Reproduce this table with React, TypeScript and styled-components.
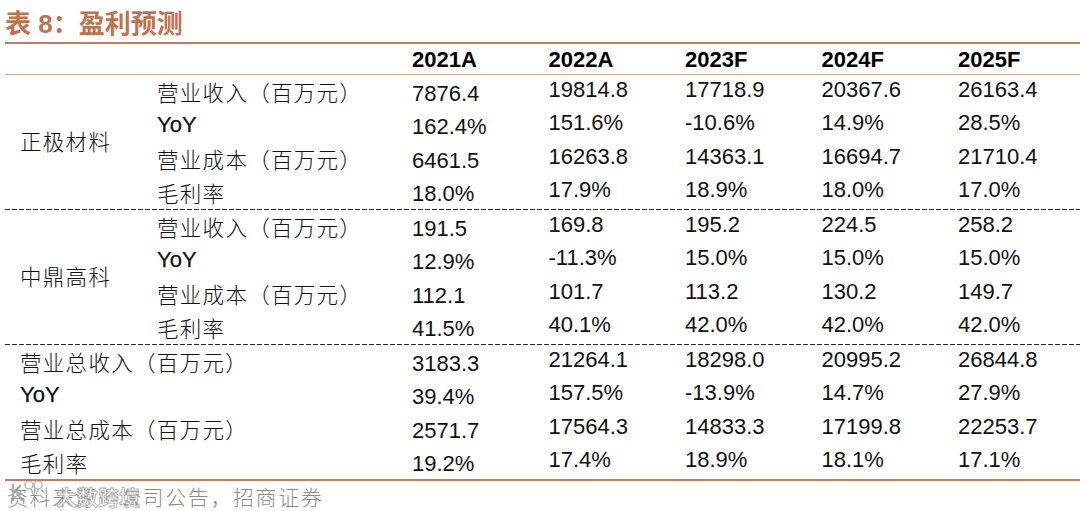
import React, { FC } from 'react';
import styled, { createGlobalStyle } from 'styled-components';

const GlobalStyle = createGlobalStyle`
  html, body {
    margin: 0;
    padding: 0;
    background: #ffffff;
  }
  body {
    font-family: "Liberation Sans", "Noto Sans CJK SC", sans-serif;
    color: #111;
  }
`;

const GRID = '152px 255px repeat(4, 136.5px) 1fr';

type Row = { label: string; values: string[] };
type Group = { name?: string; rows: Row[] };

const years = ['2021A', '2022A', '2023F', '2024F', '2025F'];

const groups: Group[] = [
  {
    name: '正极材料',
    rows: [
      { label: '营业收入（百万元）', values: ['7876.4', '19814.8', '17718.9', '20367.6', '26163.4'] },
      { label: 'YoY', values: ['162.4%', '151.6%', '-10.6%', '14.9%', '28.5%'] },
      { label: '营业成本（百万元）', values: ['6461.5', '16263.8', '14363.1', '16694.7', '21710.4'] },
      { label: '毛利率', values: ['18.0%', '17.9%', '18.9%', '18.0%', '17.0%'] },
    ],
  },
  {
    name: '中鼎高科',
    rows: [
      { label: '营业收入（百万元）', values: ['191.5', '169.8', '195.2', '224.5', '258.2'] },
      { label: 'YoY', values: ['12.9%', '-11.3%', '15.0%', '15.0%', '15.0%'] },
      { label: '营业成本（百万元）', values: ['112.1', '101.7', '113.2', '130.2', '149.7'] },
      { label: '毛利率', values: ['41.5%', '40.1%', '42.0%', '42.0%', '42.0%'] },
    ],
  },
  {
    rows: [
      { label: '营业总收入（百万元）', values: ['3183.3', '21264.1', '18298.0', '20995.2', '26844.8'] },
      { label: 'YoY', values: ['39.4%', '157.5%', '-13.9%', '14.7%', '27.9%'] },
      { label: '营业总成本（百万元）', values: ['2571.7', '17564.3', '14833.3', '17199.8', '22253.7'] },
      { label: '毛利率', values: ['19.2%', '17.4%', '18.9%', '18.1%', '17.1%'] },
    ],
  },
];

const Page = styled.div`
  position: relative;
  width: 1080px;
  height: 511px;
  overflow: hidden;
  padding-left: 5px;
  box-sizing: border-box;
`;

const Title = styled.div`
  height: 42px;
  display: flex;
  align-items: center;
  font-size: 26px;
  font-weight: 700;
  color: #c0714f;
  white-space: pre;
`;

const Table = styled.div`
  width: 1075px;
  border-top: 2px solid #c47b61;
  border-bottom: 2px solid #c47b61;
`;

const HeaderRow = styled.div`
  display: grid;
  grid-template-columns: ${GRID};
  height: 30px;
  border-bottom: 1px solid #d8a491;
  align-items: center;
`;

const HeadCell = styled.div`
  font-size: 22px;
  font-weight: 700;
  color: #000;
  padding-top: 2px;
`;

const Section = styled.div`
  display: grid;
  grid-template-columns: ${GRID};
  grid-auto-rows: 33.5px;
  align-items: center;
`;

const DashLine = styled.div`
  height: 1px;
  background-image: repeating-linear-gradient(to right, #2a2a2a 0 5px, transparent 5px 7px);
`;

const GroupName = styled.div`
  grid-column: 1;
  grid-row: 1 / span 4;
  padding-left: 15px;
  font-size: 21.5px;
  letter-spacing: 1.3px;
  font-family: "Noto Sans CJK SC", sans-serif;
  font-weight: 300;
  align-self: center;
  padding-bottom: 4px;
`;

const RowLabel = styled.div<{ $wide?: boolean; $latin?: boolean }>`
  grid-column: ${(p) => (p.$wide ? '1 / span 2' : '2')};
  padding-left: ${(p) => (p.$wide ? '15px' : '0')};
  font-size: ${(p) => (p.$latin ? '22px' : '21.5px')};
  letter-spacing: ${(p) => (p.$latin ? '0' : '1.3px')};
  font-family: ${(p) =>
    p.$latin ? '"Liberation Sans", sans-serif' : '"Noto Sans CJK SC", sans-serif'};
  font-weight: ${(p) => (p.$latin ? 400 : 300)};
  -webkit-text-stroke: ${(p) => (p.$latin ? '0.25px #111' : '0')};
  white-space: nowrap;
`;

const Value = styled.div<{ $first?: boolean }>`
  font-size: 22px;
  white-space: nowrap;
  transform: translateY(${(p) => (p.$first ? '2px' : '-2px')});
`;

const Source = styled.div`
  height: 30px;
  display: flex;
  align-items: center;
  padding-left: 2px;
  font-family: "Noto Sans CJK SC", sans-serif;
  font-weight: 300;
  font-size: 21px;
  letter-spacing: 1.6px;
  color: #8c8c8c;
`;

/* semi-transparent site watermark lying over the source note */
const Watermark = styled.div`
  position: absolute;
  left: 10px;
  top: 479px;
  display: flex;
  align-items: flex-start;
  gap: 10px;
  font-family: "Noto Sans CJK SC", sans-serif;
  font-weight: 700;
  font-size: 21px;
  line-height: 1;
  color: rgba(248, 248, 248, 0.9);
  -webkit-text-stroke: 0.8px rgba(140, 140, 140, 0.75);

  span {
    margin-top: 7px;
  }
`;

const isLatin = (s: string) => /^[A-Za-z]+$/.test(s);

const App: FC = () => (
  <Page>
    <GlobalStyle />
    <Title>{'表 8：盈利预测'}</Title>
    <Table>
      <HeaderRow>
        <div />
        <div />
        {years.map((y) => (
          <HeadCell key={y}>{y}</HeadCell>
        ))}
      </HeaderRow>
      {groups.map((g, gi) => (
        <React.Fragment key={gi}>
          {gi > 0 && <DashLine />}
          <Section>
            {g.name && <GroupName>{g.name}</GroupName>}
            {g.rows.map((r, ri) => (
              <React.Fragment key={ri}>
                <RowLabel $wide={!g.name} $latin={isLatin(r.label)} style={{ gridRow: ri + 1 }}>
                  {r.label}
                </RowLabel>
                {r.values.map((v, vi) => (
                  <Value key={vi} $first={vi === 0} style={{ gridRow: ri + 1 }}>
                    {v}
                  </Value>
                ))}
              </React.Fragment>
            ))}
          </Section>
        </React.Fragment>
      ))}
    </Table>
    <Source>资料来源：公司公告，招商证券</Source>
    <Watermark>
      <svg width="36" height="24" viewBox="0 0 36 24" fill="none">
        <path d="M3 6v15M3 14l7-7M6 12l6 9" stroke="rgba(150,150,150,0.75)" strokeWidth="2.5" strokeLinecap="round" />
        <circle cx="19" cy="6" r="4" stroke="rgba(160,160,160,0.75)" strokeWidth="1.5" />
        <circle cx="28" cy="6" r="4" stroke="rgba(160,160,160,0.75)" strokeWidth="1.5" />
      </svg>
      <span>大数跨境</span>
    </Watermark>
  </Page>
);

export default App;
